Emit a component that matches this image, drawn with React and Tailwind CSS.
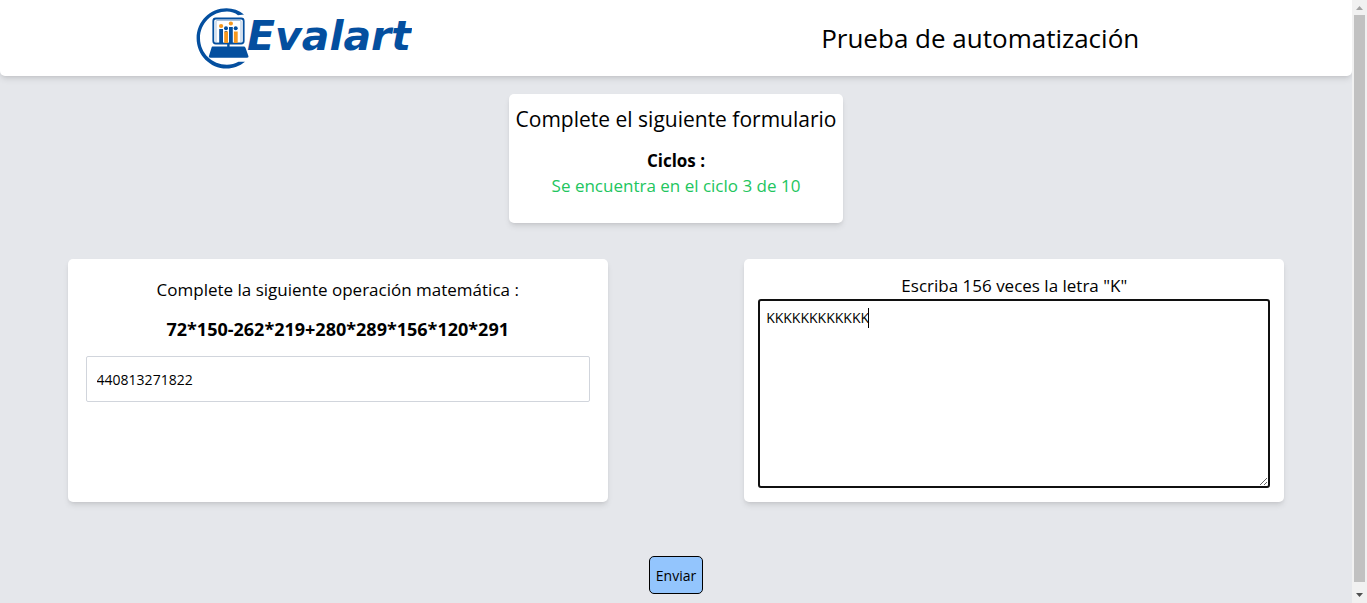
import React, { useState } from 'react';

function Logo() {
  return (
    <svg viewBox="0 0 216 62" className="h-[62px] w-[216px]" role="img" aria-label="Evalart">
      <path d="M48 7.500C43 3.500 37 1.300 30.500 1.300C14 1.300 0.600 14.500 0.600 31.300C0.600 48 14 61.600 30.500 61.600C37.500 61.600 43.500 59.200 49 54.800L42.500 54.800C39 56.800 35 57.800 31 57.800C16 57.800 4 46 4 31.300C4 16.500 16 4.600 31 4.600C35 4.600 39 5.800 42 8.300Z" fill="#044f9f" />
      <rect x="17.300" y="11.500" width="30.400" height="25" rx="2.500" fill="#fff" stroke="#044f9f" strokeWidth="1.800" />
      <rect x="20" y="13.500" width="25" height="22" rx="1" fill="#fff" stroke="#6f98c6" strokeWidth="0.600" />
      <g fill="#044f9f">
        <rect x="23.200" y="22" width="3.800" height="14" />
        <circle cx="30" cy="21.300" r="2" />
        <rect x="28.800" y="24" width="2.400" height="2" />
        <rect x="33" y="20" width="3.800" height="16" />
        <circle cx="39.700" cy="21.300" r="2" />
        <path d="M31.200 36h2.400v3.500h-2.400zM17 39.500h30.500c1 0 1.500.5 2 1.300l2.800 8c.5 1.300 0 2-1.300 2H14.500c-1.300 0-2-.8-1.500-2l2.500-8c.2-.8.500-1.300 1.500-1.300z" />
      </g>
      <g fill="#f7981d">
        <circle cx="25.100" cy="19" r="2.100" />
        <rect x="28.200" y="24.500" width="3.800" height="11.500" />
        <circle cx="34.900" cy="16.500" r="2.100" />
        <rect x="37.900" y="24.500" width="3.800" height="11.500" />
      </g>
      <text x="51" y="43" fontFamily="DejaVu Sans" fontSize="41" fontWeight="700" fontStyle="italic" fill="#044f9f">Evalart</text>
    </svg>
  );
}

function Scrollbar() {
  return (
    <div aria-hidden="true" className="sticky top-0 flex h-screen w-[15px] shrink-0 flex-col items-center justify-between bg-[#f1f1f1]">
      <svg viewBox="0 0 15 15" className="h-[15px] w-[15px] shrink-0"><path d="M4 10h7L7.500 6z" fill="#a3a3a3" /></svg>
      <div className="mb-[6px] w-[11px] grow bg-[#c1c1c1]" />
      <svg viewBox="0 0 15 15" className="h-[15px] w-[15px] shrink-0"><path d="M4 5h7L7.500 9z" fill="#505050" /></svg>
    </div>
  );
}

export default function App() {
  const [result, setResult] = useState('440813271822');
  const [letters, setLetters] = useState('KKKKKKKKKKKK');
  return (
    <div className="flex min-h-screen bg-gray-200 font-['Segoe_UI','Open_Sans',sans-serif] text-[17px] leading-[25px] text-black">
      <div className="min-w-0 grow">
        <header className="flex items-center rounded-b-[5px] bg-white py-[7px] shadow-md">
          <div className="flex w-[45%] justify-center"><Logo /></div>
          <h1 className="grow text-center text-[26px] leading-9">Prueba de automatización</h1>
        </header>
        <form onSubmit={(e) => e.preventDefault()} className="flex flex-col items-center pt-[18px] pb-2">
          <section className="rounded-[5px] bg-white px-[7px] pt-[9px] pb-[25px] text-center shadow-md">
            <h2 className="mb-[13px] text-[21px] leading-8">Complete el siguiente formulario</h2>
            <p className="font-bold">Ciclos :</p>
            <p className="text-[#22c55e]">Se encuentra en el ciclo 3 de 10</p>
          </section>
          <div className="mt-9 flex w-full justify-between px-[5%]">
            <section className="w-[44.4%] rounded-[5px] bg-white p-[18px] text-center shadow-md">
              <label htmlFor="result">Complete la siguiente operación matemática :</label>
              <p className="mt-[15px] text-[18px] font-bold">72*150-262*219+280*289*156*120*291</p>
              <input id="result" type="text" value={result} onChange={(e) => setResult(e.target.value)} className="mt-[14px] block h-[46px] w-full rounded-[2px] border border-gray-300 px-[10px] text-[14px] outline-none" />
            </section>
            <section className="w-[44.4%] rounded-[5px] bg-white p-[14px] text-center shadow-md">
              <label htmlFor="letters" className="block">Escriba 156 veces la letra "K"</label>
              <div className="relative">
                <textarea id="letters" value={letters} onChange={(e) => setLetters(e.target.value)} className="mt-px block h-[189px] w-full rounded-[3px] border-2 border-[#101010] px-[6px] py-[7px] text-[14px] leading-5 caret-transparent outline-none" />
                <span className="absolute top-[9px] left-[110px] h-5 w-px bg-black" />
              </div>
            </section>
          </div>
          <button type="submit" className="mt-[54px] h-[38px] rounded-[5px] border border-black bg-[#93c5fd] px-[6px] text-[14px]">Enviar</button>
        </form>
      </div>
      <Scrollbar />
    </div>
  );
}
